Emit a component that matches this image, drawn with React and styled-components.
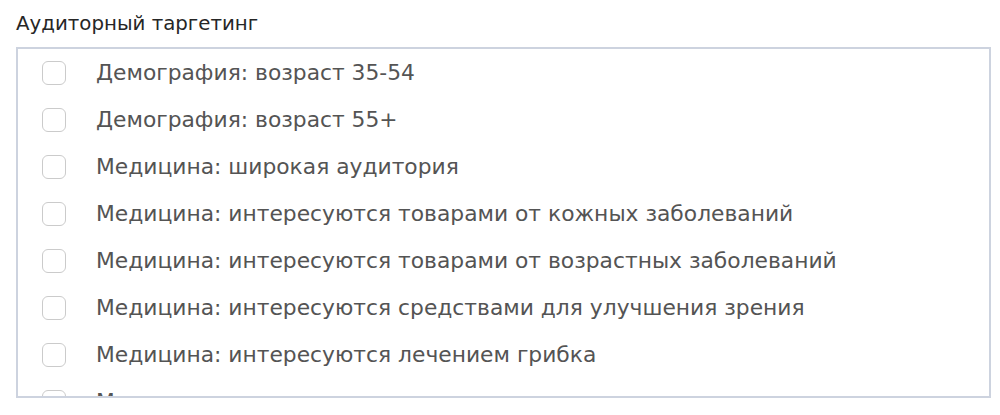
import React from "react";
import styled, { createGlobalStyle } from "styled-components";

const Global = createGlobalStyle`
  html, body { margin: 0; padding: 0; background: #fff; }
  body { font-family: "DejaVu Sans", "Liberation Sans", Arial, sans-serif; }
  * { box-sizing: border-box; }
`;

const Page = styled.div`
  padding: 12px 9px 0 16px;
  width: 1000px;
`;

const Title = styled.div`
  font-size: 19.8px;
  line-height: 23px;
  color: #262626;
  margin-bottom: 12px;
`;

const Box = styled.div`
  height: 351px;
  border: 2px solid #cdd3df;
  overflow: hidden;
`;

const List = styled.ul`
  list-style: none;
  margin: 0;
  padding: 0 0 0 24px;
`;

const Row = styled.li`
  display: flex;
  align-items: center;
  height: 47px;
  gap: 30px;
`;

const Check = styled.span`
  flex: none;
  width: 24px;
  height: 24px;
  border: 1px solid #cbcbcb;
  border-radius: 6px;
  background: #fff;
`;

const Label = styled.span`
  font-size: 21.8px;
  line-height: 26px;
  color: #545454;
  white-space: nowrap;
`;

const items = [
  "Демография: возраст 35-54",
  "Демография: возраст 55+",
  "Медицина: широкая аудитория",
  "Медицина: интересуются товарами от кожных заболеваний",
  "Медицина: интересуются товарами от возрастных заболеваний",
  "Медицина: интересуются средствами для улучшения зрения",
  "Медицина: интересуются лечением грибка",
  "Медицина: интересуются лечением суставов",
  "Медицина: интересуются здоровым питанием",
];

export default function App() {
  return (
    <Page>
      <Global />
      <Title>Аудиторный таргетинг</Title>
      <Box>
        <List>
          {items.map((t) => (
            <Row key={t}>
              <Check />
              <Label>{t}</Label>
            </Row>
          ))}
        </List>
      </Box>
    </Page>
  );
}
